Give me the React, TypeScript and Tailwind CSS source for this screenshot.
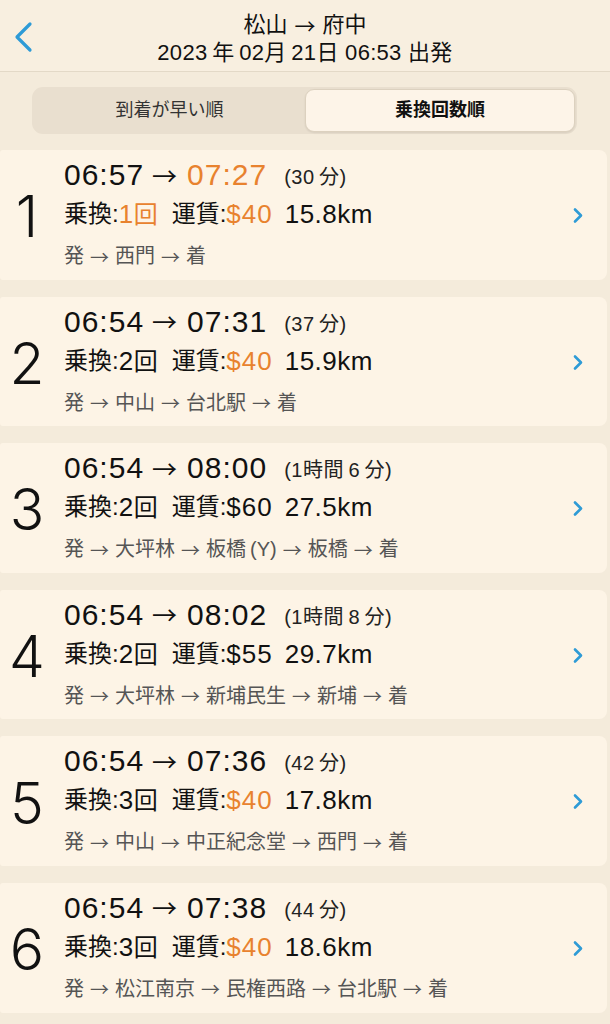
import React from "react";

const BASE = '"Liberation Sans", "Noto Sans CJK JP", sans-serif';
const JP = '"Noto Sans CJK JP", "Liberation Sans", sans-serif';

type Route = {
  n: number;
  dep: string;
  arr: string;
  arrOrange?: boolean;
  dur: React.ReactNode;
  tr: string;
  trOrange?: boolean;
  fare: string;
  fareOrange?: boolean;
  km: string;
  path: string[];
};

const routes: Route[] = [
  { n: 1, dep: "06:57", arr: "07:27", arrOrange: true, dur: "(30\u2009分)", tr: "1", trOrange: true, fare: "$40", fareOrange: true, km: "15.8km", path: ["発", "西門", "着"] },
  { n: 2, dep: "06:54", arr: "07:31", dur: "(37\u2009分)", tr: "2", fare: "$40", fareOrange: true, km: "15.9km", path: ["発", "中山", "台北駅", "着"] },
  { n: 3, dep: "06:54", arr: "08:00", dur: "(1時間\u20096\u2009分)", tr: "2", fare: "$60", km: "27.5km", path: ["発", "大坪林", "板橋\u2009(Y)", "板橋", "着"] },
  { n: 4, dep: "06:54", arr: "08:02", dur: "(1時間\u20098\u2009分)", tr: "2", fare: "$55", km: "29.7km", path: ["発", "大坪林", "新埔民生", "新埔", "着"] },
  { n: 5, dep: "06:54", arr: "07:36", dur: "(42\u2009分)", tr: "3", fare: "$40", fareOrange: true, km: "17.8km", path: ["発", "中山", "中正紀念堂", "西門", "着"] },
  { n: 6, dep: "06:54", arr: "07:38", dur: "(44\u2009分)", tr: "3", fare: "$40", fareOrange: true, km: "18.6km", path: ["発", "松江南京", "民権西路", "台北駅", "着"] },
];

const ORANGE = "text-[#e8822e]";

function Card({ r }: { r: Route }) {
  return (
    <div className="h-[129.6px] w-[607px] rounded-r-[8px] rounded-l-[3px] bg-[#fdf4e6] flex items-center relative">
      <div className="w-[64px] flex justify-center pr-[10px] pt-[4px]">
        <span className="text-[57px] leading-none text-[#111]" style={{ fontFamily: '"Inter", "Liberation Sans", sans-serif', fontWeight: 300 }}>
          {r.n}
        </span>
      </div>
      <div className="flex-1 flex flex-col h-full pt-[8px]">
        <div className="h-[34px] flex items-center text-[#111]">
          <span className="text-[30px] leading-none tracking-[1px]">{r.dep}</span>
          <span className="text-[25px] leading-none ml-[8px] mr-[10px]" style={{ fontFamily: JP }}>→</span>
          <span className={`text-[30px] leading-none tracking-[1px] ${r.arrOrange ? ORANGE : ""}`}>{r.arr}</span>
          <span className="text-[20px] leading-none ml-[17px] mt-[4px] text-[#222] tracking-[0.5px]">{r.dur}</span>
        </div>
        <div className="h-[44px] flex items-center text-[24px] text-[#111] leading-none">
          <span>乗換:</span>
          <span className={r.trOrange ? ORANGE : ""}>
            <span className="text-[26px] tracking-[0.5px]">{r.tr}</span>
            <span>回</span>
          </span>
          <span className="ml-[14px]">運賃:</span>
          <span className={`text-[26px] tracking-[1px] ${r.fareOrange ? ORANGE : ""}`}>{r.fare}</span>
          <span className="ml-[12px] text-[26px] tracking-[0.5px]">{r.km}</span>
        </div>
        <div className="h-[40px] flex items-center text-[20px] text-[#555] leading-none">
          {r.path.map((p, i) => (
            <React.Fragment key={i}>
              {i > 0 && (
                <span className="mx-[6px] text-[19px]" style={{ fontFamily: JP }}>
                  →
                </span>
              )}
              <span>{p}</span>
            </React.Fragment>
          ))}
        </div>
      </div>
      <svg className="absolute left-[572px] top-[57px]" width="12" height="17" viewBox="0 0 12 17">
        <path d="M3 2.5 L9 8.5 L3 14.5" fill="none" stroke="#2e9bd6" strokeWidth="2.6" strokeLinecap="round" strokeLinejoin="round" />
      </svg>
    </div>
  );
}

export default function App() {
  return (
    <div className="w-[610px] h-[1024px] overflow-hidden bg-[#f4ebdb] flex flex-col" style={{ fontFamily: BASE }}>
      <div className="h-[72px] bg-[#f8efe0] border-b border-[#e3d9c7] relative flex flex-col items-center pt-[11px]">
        <svg className="absolute left-[12px] top-[21px]" width="24" height="32" viewBox="0 0 24 32">
          <path d="M18 3 L5 16 L18 29" fill="none" stroke="#2e9bd6" strokeWidth="3.2" strokeLinecap="round" strokeLinejoin="round" />
        </svg>
        <div className="text-[22px] leading-[28px] text-[#111] flex items-center">
          <span>松山</span>
          <span className="mx-[7px] text-[21px]" style={{ fontFamily: JP }}>→</span>
          <span>府中</span>
        </div>
        <div className="text-[22px] leading-[28px] text-[#111] tracking-[0.3px]">2023{"\u2009"}年{"\u2009"}02月{"\u2009"}21日 06:53 出発</div>
      </div>
      <div className="px-[32px] pt-[15px] pb-[15px]">
        <div className="h-[47px] w-[545px] rounded-[11px] bg-[#e9dfcf] flex p-[2px]">
          <div className="flex-1 flex items-center justify-center text-[18px] text-[#333]">到着が早い順</div>
          <div className="w-[270px] rounded-[9px] bg-[#fdf4e8] border-[1.5px] border-[#dcd1bf] shadow-[0_1px_2px_rgba(0,0,0,0.08)] flex items-center justify-center text-[18px] font-bold text-[#111]">
            乗換回数順
          </div>
        </div>
      </div>
      <div className="flex flex-col gap-[17px] pt-[1px]">
        {routes.map((r) => (
          <Card key={r.n} r={r} />
        ))}
      </div>
    </div>
  );
}
